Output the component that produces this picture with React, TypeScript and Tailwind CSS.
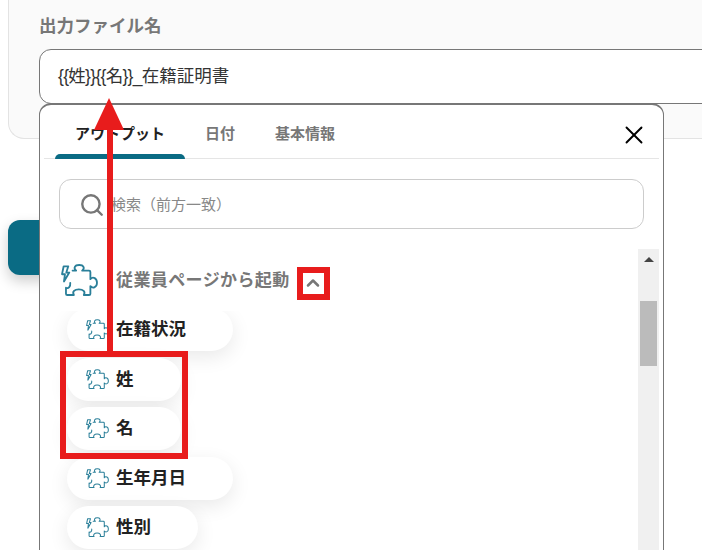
import React from 'react';
import { Search, X, ChevronUp } from 'lucide-react';

const FONT = '[font-family:"Liberation_Sans","Noto_Sans_CJK_JP",sans-serif]';

const outputs = [
  { label: '在籍状況', width: 'w-[166px]', top: 'mt-0' },
  { label: '姓', width: 'w-[114px]', top: 'mt-[7px]' },
  { label: '名', width: 'w-[114px]', top: 'mt-[6px]' },
  { label: '生年月日', width: 'w-[166px]', top: 'mt-[7px]' },
  { label: '性別', width: 'w-[131px]', top: 'mt-[6px]' },
];

function PuzzleBolt({ className, stroke }: { className: string; stroke: number }) {
  return (
    <svg viewBox="33 40 112 100" fill="none" stroke="#2a7f99" strokeWidth={stroke} strokeLinejoin="round" strokeLinecap="round" className={className}>
      <path d="M55 47 H41 L36 71 H45 L42 93 L58 66 H49 Z" />
      <path d="M68 60 H79 C70 53 74 43 88 43 C102 43 106 53 97 60 H118 Q122 60 122 64 V86 C130 76 142 84 142 97 C142 110 130 116 122 107 V130 Q122 134 118 134 H102 C108 124 100 117 87 117 C74 117 66 124 72 134 H52 Q48 134 48 130 V112 C56 116 62 108 61 97" />
    </svg>
  );
}

export default function App() {
  return (
    <div className={`relative w-[702px] h-[550px] overflow-hidden bg-white ${FONT}`}>
      {/* form panel behind the popup */}
      <div className="ml-2 h-[139px] bg-[#fafafa] border-l border-b border-[#e3e3e3] rounded-bl-2xl pl-[30px] pt-[14px]">
        <div className="text-[17.5px] leading-6 font-bold text-[#777777]">出力ファイル名</div>
        <div className="mt-[11px] w-[700px] h-[55px] bg-white border border-[#777777] rounded-xl pl-[18px] pb-[1px] flex items-center text-[17.5px] text-[#333333]">
          <span className="tracking-[-0.7px]">{'{{姓}}{{名}}_'}</span>
          <span>在籍証明書</span>
        </div>
      </div>

      {/* teal button peeking out on the left */}
      <div className="absolute left-2 top-[220px] w-[60px] h-[55px] bg-[#0a6b84] rounded-xl shadow-[0_6px_14px_rgba(0,0,0,0.2)]" />

      {/* popup */}
      <div className="absolute isolate left-[39px] top-[103px] w-[625px] h-[470px] bg-white border border-t-2 border-[#777777] rounded-t-xl overflow-hidden">
        <div className="relative mx-1 h-[54px] border-b border-[#e5e5e5] flex items-start pl-[11px] text-[15px] font-bold">
          <div className="relative w-[130px] h-[54px] flex justify-center pt-[17px] leading-6 text-[#222222]">
            アウトプット
            <div className="absolute left-0 right-0 bottom-0 h-[5px] bg-[#0a6b84] rounded-t-md" />
          </div>
          <div className="ml-5 pt-[17px] leading-6 text-[#777777]">日付</div>
          <div className="ml-[40px] pt-[17px] leading-6 text-[#777777]">基本情報</div>
          <X className="absolute right-[10px] top-[15px] w-[30px] h-[30px] text-black" strokeWidth={1.5} />
        </div>

        <div className="mx-[19px] mt-5 h-[50px] border border-[#cccccc] rounded-xl flex items-center pl-[19px]">
          <Search className="w-[26px] h-[26px] mt-[1px] text-[#777777]" strokeWidth={2.2} />
          <span className="ml-[6px] mt-[2px] text-[15px] text-[#888888]">検索（前方一致）</span>
        </div>

        <div className="flex mt-5 h-[400px]">
          <div className="flex-1 min-w-0 pl-[21px]">
            {/* white header row clips the first pill's top edge */}
            <div className="relative z-10 -ml-[21px] pl-[21px] -mb-[3px] bg-white flex items-center h-[62px] pb-[1px] pt-[5px]">
              <PuzzleBolt className="w-[37px] h-[33px] -mt-[3px]" stroke={5.5} />
              <span className="ml-[18px] -mt-[3px] text-[17px] font-bold text-[#777777] tracking-[0.4px]">従業員ページから起動</span>
              <ChevronUp className="ml-[13px] mt-[2px] w-[20px] h-[20px] text-[#777777]" strokeWidth={3} />
            </div>
            <div className="pl-[6px] flex flex-col">
              {outputs.map((o) => (
                <div key={o.label} className={`${o.width} ${o.top} h-[43px] shrink-0 bg-white rounded-full shadow-[0_6px_20px_rgba(0,0,0,0.09)] flex items-center pl-[19px]`}>
                  <PuzzleBolt className="w-[23px] h-[21px]" stroke={5} />
                  <span className="ml-[7px] text-[17.5px] font-bold text-[#222222]">{o.label}</span>
                </div>
              ))}
            </div>
          </div>
          <div className="mr-1 w-[21px] bg-[#f0f0f0] flex flex-col items-center">
            <div className="mt-2 w-0 h-0 border-x-[5px] border-x-transparent border-b-[5px] border-b-[#444444]" />
            <div className="mt-[39px] w-[17px] h-[65px] bg-[#bbbbbb]" />
          </div>
        </div>
      </div>

      {/* red annotations */}
      <div className="absolute left-[107px] top-[128px] w-[6px] h-[224px] bg-[#e81c1c]" />
      <div className="absolute left-[94px] top-[98px] w-0 h-0 border-x-[15px] border-x-transparent border-b-[32px] border-b-[#e81c1c]" />
      <div className="absolute left-[297px] top-[267px] w-[33px] h-[33px] border-[6px] border-[#e81c1c]" />
      <div className="absolute left-[60px] top-[351px] w-[128px] h-[108px] border-[6px] border-[#e81c1c]" />
    </div>
  );
}
